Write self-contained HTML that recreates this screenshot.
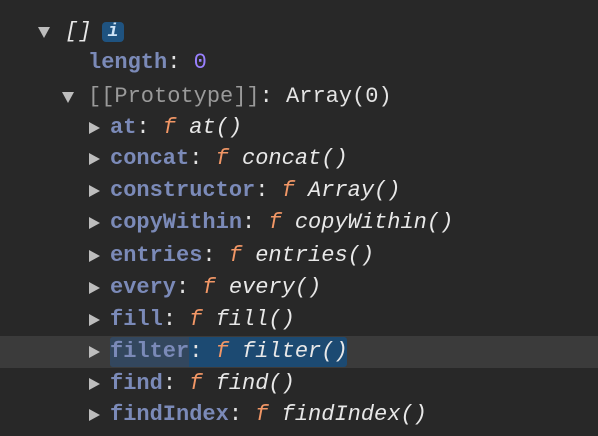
<!DOCTYPE html>
<html><head><style>
body{margin:0;background:#282828;width:598px;height:436px;overflow:hidden;font-family:"Liberation Mono","DejaVu Sans Mono",monospace;font-size:22px;color:#e3e3e3}
.r{position:absolute;left:0;width:598px;height:32px;line-height:32px;white-space:pre}
.t{position:absolute;top:0}
.k{color:#7b8ab8;font-weight:bold}
.f{color:#f29766;font-style:italic}
.n{font-style:italic;color:#e8e8e8}
.p{color:#9a9a9a}
.tri-d{position:absolute;width:0;height:0;border-left:6px solid transparent;border-right:6px solid transparent;border-top:11px solid #bdbdbd;top:11px}
.tri-r{position:absolute;width:0;height:0;border-top:6px solid transparent;border-bottom:6px solid transparent;border-left:11px solid #bdbdbd;top:10px}
</style></head><body>
<div class="r" style="top:16px"><div class="tri-d" style="left:38px"></div><span class="t n" style="left:65px">[]</span><span class="t" style="left:102px;top:6px;width:22px;height:20px;background:#1f5380;border-radius:4px;color:#cfe3f5;font-style:italic;font-weight:bold;font-size:18px;line-height:20px;text-align:center">i</span></div>
<div class="r" style="top:47px"><span class="t" style="left:88px"><span class="k">length</span>: <span style="color:#9980ff">0</span></span></div>
<div class="r" style="top:81px"><div class="tri-d" style="left:62px"></div><span class="t" style="left:88px"><span class="p">[[Prototype]]</span>: Array(0)</span></div>
<div class="r" style="top:112px"><div class="tri-r" style="left:89px"></div><span class="t" style="left:110px"><span class="k">at</span>: <span class="f">f</span> <span class="n">at()</span></span></div>
<div class="r" style="top:143px"><div class="tri-r" style="left:89px"></div><span class="t" style="left:110px"><span class="k">concat</span>: <span class="f">f</span> <span class="n">concat()</span></span></div>
<div class="r" style="top:175px"><div class="tri-r" style="left:89px"></div><span class="t" style="left:110px"><span class="k">constructor</span>: <span class="f">f</span> <span class="n">Array()</span></span></div>
<div class="r" style="top:207px"><div class="tri-r" style="left:89px"></div><span class="t" style="left:110px"><span class="k">copyWithin</span>: <span class="f">f</span> <span class="n">copyWithin()</span></span></div>
<div class="r" style="top:240px"><div class="tri-r" style="left:89px"></div><span class="t" style="left:110px"><span class="k">entries</span>: <span class="f">f</span> <span class="n">entries()</span></span></div>
<div class="r" style="top:272px"><div class="tri-r" style="left:89px"></div><span class="t" style="left:110px"><span class="k">every</span>: <span class="f">f</span> <span class="n">every()</span></span></div>
<div class="r" style="top:304px"><div class="tri-r" style="left:89px"></div><span class="t" style="left:110px"><span class="k">fill</span>: <span class="f">f</span> <span class="n">fill()</span></span></div>
<div class="r" style="top:336px;background:#3b3b3b"><div class="tri-r" style="left:89px"></div><div style="position:absolute;left:110px;top:1px;width:237px;height:30px;background:#1c4a72;border-radius:3px"></div><div style="position:absolute;left:110px;top:1px;width:79px;height:30px;background:#33475e;border-radius:3px 0 0 3px"></div><span class="t" style="left:110px"><span class="k">filter</span>: <span class="f">f</span> <span class="n">filter()</span></span></div>
<div class="r" style="top:368px"><div class="tri-r" style="left:89px"></div><span class="t" style="left:110px"><span class="k">find</span>: <span class="f">f</span> <span class="n">find()</span></span></div>
<div class="r" style="top:399px"><div class="tri-r" style="left:89px"></div><span class="t" style="left:110px"><span class="k">findIndex</span>: <span class="f">f</span> <span class="n">findIndex()</span></span></div>
</body></html>
